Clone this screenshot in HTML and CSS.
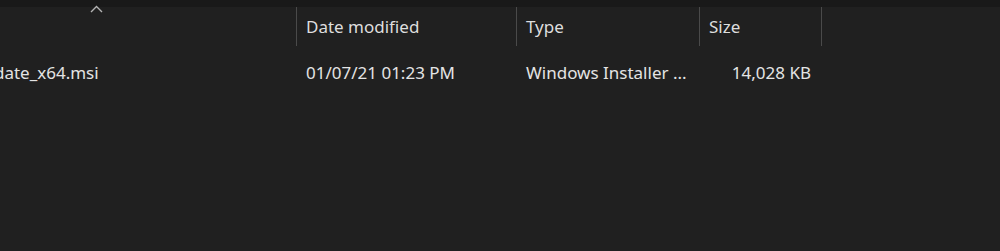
FILE: index.html
```html
<!DOCTYPE html>
<html lang="en">
<head>
    <meta charset="UTF-8">
    <title>Downloads</title>
    <link rel="stylesheet" href="styles.css">
</head>
<body>
    <div class="explorer">
        <div class="topbar"></div>
        <div class="view">
            <div class="row header">
                <div class="cell name">
                    <svg class="sort" width="13" height="8" viewBox="0 0 13 8">
                        <path d="M1 7 L6.5 1.5 L12 7" fill="none" stroke="#b4b4b4" stroke-width="1.4"/>
                    </svg>
                </div>
                <div class="cell">Date modified</div>
                <div class="cell">Type</div>
                <div class="cell">Size</div>
                <div class="cell rest"></div>
            </div>
            <div class="row file">
                <div class="cell name"><span class="fname">AcroRdrUpdate_x64.msi</span></div>
                <div class="cell">01/07/21 01:23 PM</div>
                <div class="cell">Windows Installer ...</div>
                <div class="cell size">14,028 KB</div>
                <div class="cell rest"></div>
            </div>
        </div>
    </div>
</body>
</html>
```

FILE: styles.css
```css
body {
    margin: 0;
    padding: 0;
    overflow: hidden;
    background: #202020;
    font-family: "Segoe UI", "Noto Sans", sans-serif;
    font-size: 17px;
}

.explorer {
    height: 251px;
    overflow: hidden;
}

.topbar {
    height: 7px;
    background: #191919;
}

.view {
    margin-left: -102px;
}

.row {
    display: grid;
    grid-template-columns: 399px 220px 183px 122px 1fr;
    white-space: nowrap;
}

.cell {
    padding-left: 9px;
}

/* column headers */
.header {
    height: 39px;
    color: #dedede;
}

.header .cell {
    position: relative;
    display: flex;
    align-items: center;
    border-right: 1px solid #4a4a4a;
    box-sizing: border-box;
}

.header .cell.rest {
    border-right: none;
}

.sort {
    position: absolute;
    left: 192px;
    top: -2px;
}

/* file rows */
.file {
    margin-top: 11px;
    height: 30px;
    align-items: center;
    color: #e4e4e4;
}

.file .cell {
    overflow: hidden;
}

.file .name {
    text-align: right;
    padding-right: 199px;
    box-sizing: border-box;
}

.file .size {
    text-align: right;
    padding-right: 11px;
}
```
